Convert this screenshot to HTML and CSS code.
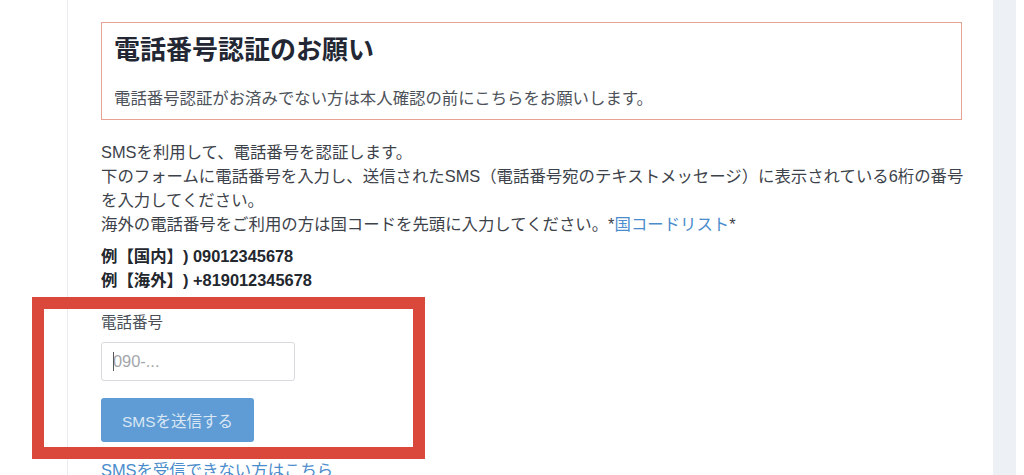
FILE: index.html
```html
<!DOCTYPE html>
<html lang="ja">

<head>
  <meta charset="UTF-8" />
  <title>電話番号認証</title>
  <link rel="stylesheet" href="styles.css">
</head>

<body>
  <div id="page">
    <div id="gutter"></div>
    <main id="content">
      <div class="notice">
        <h2 class="notice-title">電話番号認証のお願い</h2>
        <p class="notice-text">電話番号認証がお済みでない方は本人確認の前にこちらをお願いします。</p>
      </div>

      <p class="intro">
        SMSを利用して、電話番号を認証します。<br>
        下のフォームに電話番号を入力し、送信されたSMS（電話番号宛のテキストメッセージ）に表示されている6桁の番号を入力してください。<br>
        海外の電話番号をご利用の方は国コードを先頭に入力してください。*<a href="#">国コードリスト</a>*
      </p>

      <div class="examples">
        <div>例【国内】) 09012345678</div>
        <div>例【海外】) +819012345678</div>
      </div>

      <form class="sms-form">
        <label class="field-label" for="tel">電話番号</label>
        <div class="input-wrap">
          <input id="tel" class="tel-input" type="text" placeholder="090-...">
          <span class="caret"></span>
        </div>
        <button type="button" class="send-btn" disabled>SMSを送信する</button>
      </form>

      <a class="help-link" href="#">SMSを受信できない方はこちら</a>

      <!-- annotation frame drawn over the form -->
      <div class="highlight"></div>
    </main>
    <aside id="sidebar"></aside>
  </div>
</body>

</html>
```

FILE: styles.css
```css
* {
  margin: 0;
  padding: 0;
  box-sizing: border-box;
}

html,
body {
  background: #fff;
  font-family: 'Liberation Sans', 'Noto Sans CJK JP', sans-serif;
  color: #3a3f47;
  overflow: hidden;
  height: 100%;
  text-spacing-trim: space-all;
}

#page {
  display: flex;
  height: 475px;
}

#gutter {
  width: 67px;
  flex-shrink: 0;
}

#content {
  position: relative;
  width: 926px;
  flex-shrink: 0;
  border-left: 1px solid #e8ecf2;
  padding: 22px 26px 0 33px;
}

#sidebar {
  width: 23px;
  background: #edf0f5;
}

/* notice box */
.notice {
  border: 1px solid #e8a295;
  padding: 9px 12px 9px;
  width: 861px;
}

.notice-title {
  font-size: 26px;
  font-weight: bold;
  color: #222733;
  line-height: 36px;
  margin-bottom: 18px;
}

.notice-text {
  font-size: 16.4px;
  line-height: 24px;
  color: #4d525a;
}

/* intro */
.intro {
  margin-top: 20px;
  font-size: 16.4px;
  line-height: 24px;
  width: 866px;
  color: #3d424a;
}

.intro a,
.help-link {
  color: #4a8ccc;
  text-decoration: none;
}

.examples {
  margin-top: 8px;
  font-size: 16.4px;
  font-weight: bold;
  line-height: 24px;
  color: #23272e;
}

/* form */
.sms-form {
  display: flex;
  flex-direction: column;
  align-items: flex-start;
  margin-top: 21px;
}

.field-label {
  font-size: 15.5px;
  line-height: 20px;
  color: #4a4f57;
}

.input-wrap {
  position: relative;
  margin-top: 9px;
}

.tel-input {
  width: 194px;
  height: 39px;
  border: 1px solid #d8dadd;
  border-radius: 3px;
  padding: 0 11px;
  font-family: inherit;
  font-size: 16.4px;
  color: #333;
  outline: none;
}

.tel-input::placeholder {
  color: #a3a6ab;
}

.caret {
  position: absolute;
  left: 12px;
  top: 10px;
  width: 1px;
  height: 19px;
  background: #55585d;
}

.send-btn {
  margin-top: 17px;
  width: 153px;
  height: 44px;
  border: none;
  border-radius: 3px;
  background: #5f9bd4;
  color: #d9e7f5;
  font-family: inherit;
  font-size: 15.5px;
}

.help-link {
  display: block;
  margin-top: 16px;
  font-size: 16.4px;
  line-height: 24px;
}

.highlight {
  position: absolute;
  left: -36px;
  top: 297px;
  width: 393px;
  height: 162px;
  border: 12px solid #d9483b;
  pointer-events: none;
}
```
